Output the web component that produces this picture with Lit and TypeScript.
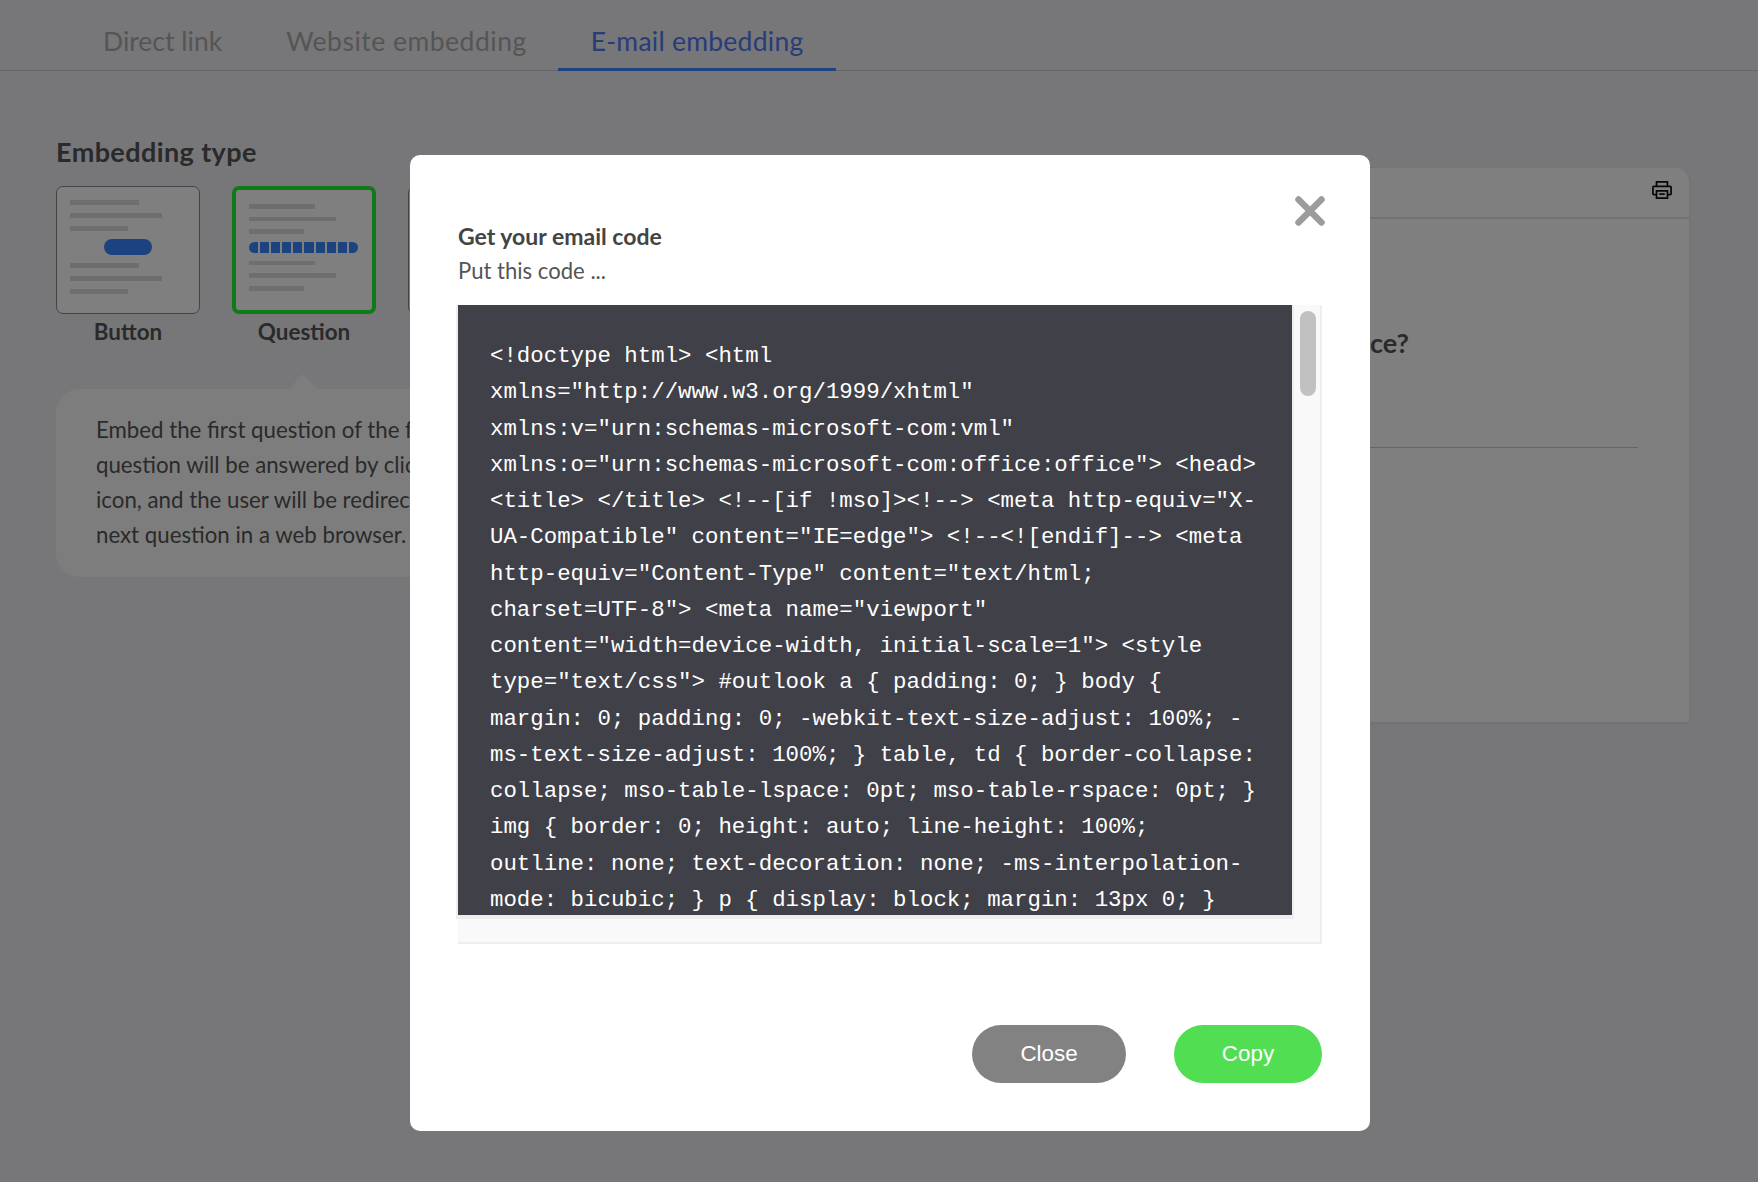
import { LitElement, html, css } from "lit";
import { customElement } from "lit/decorators.js";

const CODE = [
  `<!doctype html> <html`,
  `xmlns="http://www.w3.org/1999/xhtml"`,
  `xmlns:v="urn:schemas-microsoft-com:vml"`,
  `xmlns:o="urn:schemas-microsoft-com:office:office"> <head>`,
  `<title> </title> <!--[if !mso]><!--> <meta http-equiv="X-`,
  `UA-Compatible" content="IE=edge"> <!--<![endif]--> <meta`,
  `http-equiv="Content-Type" content="text/html;`,
  `charset=UTF-8"> <meta name="viewport"`,
  `content="width=device-width, initial-scale=1"> <style`,
  `type="text/css"> #outlook a { padding: 0; } body {`,
  `margin: 0; padding: 0; -webkit-text-size-adjust: 100%; -`,
  `ms-text-size-adjust: 100%; } table, td { border-collapse:`,
  `collapse; mso-table-lspace: 0pt; mso-table-rspace: 0pt; }`,
  `img { border: 0; height: auto; line-height: 100%;`,
  `outline: none; text-decoration: none; -ms-interpolation-`,
  `mode: bicubic; } p { display: block; margin: 13px 0; }`,
];

@customElement("app-root")
export class AppRoot extends LitElement {
  static styles = css`
    :host { display: block; position: relative; width: 1758px; height: 1182px; overflow: hidden; background: #eeeef3; font-family: Lato, "Open Sans", sans-serif; color: #555; }
    .tabs { display: flex; height: 71px; box-sizing: border-box; padding-left: 71px; border-bottom: 1px solid #ccc; }
    .tab { padding: 25px 32px 0; font-size: 26.5px; letter-spacing: 0.25px; line-height: 32px; color: #aaa; box-sizing: border-box; height: 71px; white-space: nowrap; }
    .tab.direct { letter-spacing: 0; }
    .tab.web { letter-spacing: 0.5px; }
    .tab.active { padding: 25px 33px 0; margin-left: -1px; color: #5078f0; border-bottom: 3px solid #3a88ff; }
    .main { display: flex; padding: 65px 69px 0 56px; }
    .left { width: 874px; flex: none; }
    h2 { margin: 0; font-size: 27px; letter-spacing: 0.4px; line-height: 32px; font-weight: 700; color: #555; }
    .types { display: flex; gap: 32px; margin-top: 18px; }
    .type { width: 144px; }
    .label { text-align: center; font-size: 22.4px; line-height: 28px; font-weight: 700; margin-top: 4px; color: #555; }
    .thumb { box-sizing: border-box; height: 128px; border: 1px solid #888; border-radius: 7px; background: #fff; padding: 13px 13px 0; display: flex; flex-direction: column; gap: 8px; }
    .thumb.sel { border: 4px solid #1ef432; padding: 14px 13px 0; }
    .ln { height: 5px; background: #dcdcdc; flex: none; }
    .thumb.sel .ln { height: 4.6px; }
    .l1 { width: 69px; } .l2 { width: 92px; } .l3 { width: 58px; }
    .thumb.sel .l1 { width: 66px; } .thumb.sel .l2 { width: 87px; } .thumb.sel .l3 { width: 55px; }
    .pill { width: 48px; height: 16px; border-radius: 8px; background: #3884ff; align-self: center; }
    .prog { display: flex; gap: 2px; width: 109px; height: 11px; flex: none; }
    .prog i { flex: 1; background: #3884ff; }
    .prog i:first-child { border-radius: 6px 0 0 6px; }
    .prog i:last-child { border-radius: 0 6px 6px 0; }
    .tip { position: relative; margin-top: 43px; width: 860px; height: 188px; box-sizing: border-box; padding: 23px 40px; background: #fbfbfb; border-radius: 24px; font-size: 22.25px; line-height: 35px; color: #555; white-space: nowrap; }
    .tip::before { content: ""; position: absolute; left: 232px; top: -15px; border-left: 15px solid transparent; border-right: 15px solid transparent; border-bottom: 16px solid #fbfbfb; }
    .panel { flex: 1; margin-top: 32px; height: 554px; background: #fff; border-radius: 14px 14px 0 0; box-shadow: 0 1px 3px #ddd; }
    .phead { border-bottom: 2px solid #e4e4e4; display: flex; justify-content: flex-end; padding: 12px 17px 0 0; box-sizing: border-box; height: 51px; }
    .pbody { padding: 108px 51px 0 50px; }
    .pbody h3 { margin: 0; font-size: 27px; line-height: 32px; font-weight: 700; color: #555; text-align: right; padding-right: 229px; }
    .rule { height: 1px; background: #ccc; margin-top: 88px; }
    .overlay { position: absolute; inset: 0; background: rgba(0, 0, 0, 0.5); padding: 155px 0 0 410px; box-sizing: border-box; }
    .modal { position: relative; width: 960px; height: 976px; box-sizing: border-box; background: #fff; border-radius: 10px; padding: 65px 48px 0; }
    .close { position: absolute; right: 44px; top: 40px; width: 32px; height: 32px; }
    .title { font-size: 23px; line-height: 32px; font-weight: 700; color: #444; }
    .sub { font-size: 22.1px; line-height: 32px; color: #555; margin-top: 3px; }
    .frame { margin-top: 18px; height: 639px; width: 864px; box-sizing: border-box; background: #f9f9f9; border-right: 2px solid #eee; border-bottom: 2px solid #eee; display: flex; align-items: flex-start; }
    .code { box-sizing: border-box; width: 834px; height: 610px; padding: 33px 0 0 32px; background: #404048; overflow: hidden; color: #fff; font-family: "Liberation Mono", monospace; font-size: 22.4px; line-height: 36.25px; white-space: pre; box-shadow: 0 2px 0 2px #eee; }
    .thumbbar { width: 16px; height: 85px; margin: 6px 0 0 8px; border-radius: 8px; background: #c1c1c1; }
    .actions { display: flex; justify-content: flex-end; gap: 48px; margin-top: 81px; }
    .btn { height: 58px; border-radius: 29px; display: flex; align-items: center; justify-content: center; color: #fff; font-family: "Liberation Sans", Arial, sans-serif; font-size: 22.4px; }
    .b-close { width: 154px; background: #828282; }
    .b-copy { width: 148px; background: #52de52; }
  `;

  private thumbLines() {
    return html`<div class="ln l1"></div><div class="ln l2"></div><div class="ln l3"></div>`;
  }

  render() {
    return html`
      <div class="tabs">
        <div class="tab direct">Direct link</div>
        <div class="tab web">Website embedding</div>
        <div class="tab active">E-mail embedding</div>
      </div>
      <div class="main">
        <div class="left">
          <h2>Embedding type</h2>
          <div class="types">
            <div class="type">
              <div class="thumb">${this.thumbLines()}<div class="pill"></div>${this.thumbLines()}</div>
              <div class="label">Button</div>
            </div>
            <div class="type">
              <div class="thumb sel">${this.thumbLines()}<div class="prog">${Array.from({ length: 10 }, () => html`<i></i>`)}</div>${this.thumbLines()}</div>
              <div class="label">Question</div>
            </div>
            <div class="type"><div class="thumb"></div></div>
          </div>
          <div class="tip">Embed the first question of the form. The<br />question will be answered by clicking an<br />icon, and the user will be redirected to the<br />next question in a web browser.</div>
        </div>
        <div class="panel">
          <div class="phead">
            <svg width="20" height="20" viewBox="0 0 22 22" fill="none" stroke="#111" stroke-width="1.9">
              <path d="M5 7V2h12v5" />
              <path d="M5 16H2a1 1 0 0 1-1-1V8a1 1 0 0 1 1-1h18a1 1 0 0 1 1 1v7a1 1 0 0 1-1 1h-3" />
              <path d="M5 12h12v8H5z" />
              <path d="M8 15.5h6" />
            </svg>
          </div>
          <div class="pbody">
            <h3>ce?</h3>
            <div class="rule"></div>
          </div>
        </div>
      </div>
      <div class="overlay">
        <div class="modal">
          <svg class="close" viewBox="0 0 32 32" fill="none" stroke="#9c9c9c" stroke-width="6.5" stroke-linecap="round">
            <path d="M4.5 4.5 L27.5 27.5 M27.5 4.5 L4.5 27.5" />
          </svg>
          <div class="title">Get your email code</div>
          <div class="sub">Put this code ...</div>
          <div class="frame">
            <div class="code">${CODE.join("\n")}</div>
            <div class="thumbbar"></div>
          </div>
          <div class="actions">
            <div class="btn b-close">Close</div>
            <div class="btn b-copy">Copy</div>
          </div>
        </div>
      </div>
    `;
  }
}
